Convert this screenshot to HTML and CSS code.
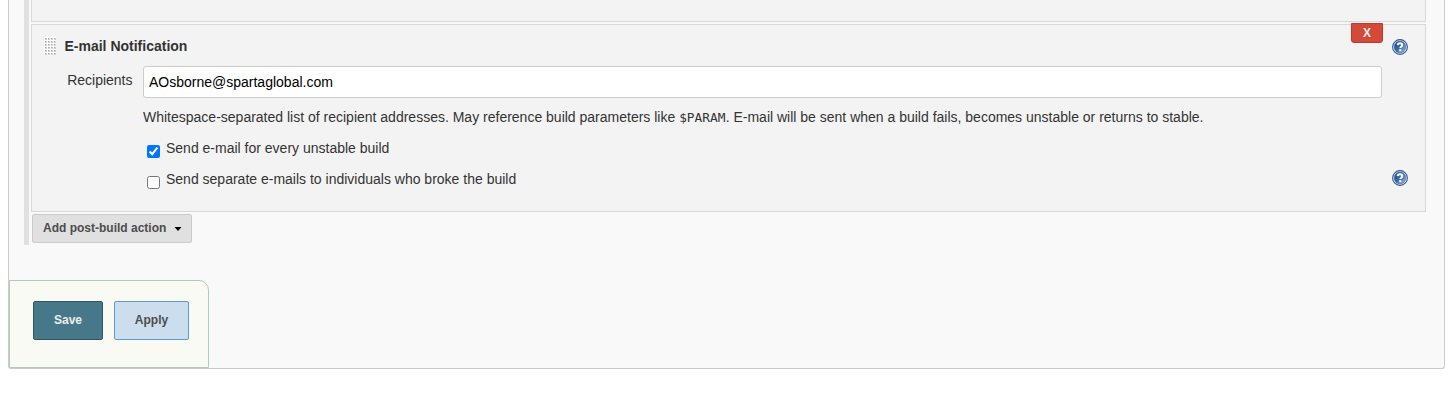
FILE: index.html
```html
<!DOCTYPE html>
<html lang="en">
<head>
<meta charset="utf-8">
<title>Post-build Actions</title>
<link rel="stylesheet" href="styles.css">
</head>
<body>
<svg class="defs" width="0" height="0" aria-hidden="true">
  <defs>
    <linearGradient id="help-fill" x1="0" y1="0" x2="1" y2="1">
      <stop offset="0" stop-color="#204a87"/>
      <stop offset=".45" stop-color="#3465a4"/>
      <stop offset="1" stop-color="#a9c1df"/>
    </linearGradient>
    <symbol id="help" viewBox="0 0 16 16">
      <circle cx="8" cy="8" r="7.4" fill="#f4f7fb" stroke="#2c5797" stroke-width="1.1"/>
      <circle cx="8" cy="8" r="5.9" fill="url(#help-fill)" stroke="#3c659f" stroke-width=".5"/>
      <path d="M5.7 6.1C5.8 4.7 6.7 4.2 8 4.2c1.4 0 2.3.7 2.3 1.8 0 1.5-2 1.5-2 3.1" fill="none" stroke="#fff" stroke-width="1.9"/>
      <rect x="7.2" y="10.2" width="2.1" height="2" fill="#fff"/>
    </symbol>
  </defs>
</svg>
<main class="panel">
  <div class="actions">
    <section class="previous"></section>
    <section class="block">
      <header class="block-head">
        <span class="grip"></span>
        <h2 class="block-title">E-mail Notification</h2>
        <button class="remove">X</button>
        <svg class="help"><use href="#help"/></svg>
      </header>
      <div class="field">
        <label class="label" for="to">Recipients</label>
        <input class="input" id="to" type="text" value="AOsborne@spartaglobal.com">
      </div>
      <p class="description">Whitespace-separated list of recipient addresses. May reference build parameters like <code class="param">$PARAM</code>. E-mail will be sent when a build fails, becomes unstable or returns to stable.</p>
      <div class="option">
        <input class="check" id="unstable" type="checkbox" checked>
        <label for="unstable">Send e-mail for every unstable build</label>
      </div>
      <div class="option">
        <input class="check" id="separate" type="checkbox">
        <label for="separate">Send separate e-mails to individuals who broke the build</label>
        <svg class="help option-help"><use href="#help"/></svg>
      </div>
    </section>
    <button class="add">Add post-build action<svg class="caret" viewBox="0 0 7 4"><path d="M0 0h7L3.5 4z"/></svg></button>
  </div>
  <footer class="bottom">
    <button class="btn save">Save</button>
    <button class="btn apply">Apply</button>
  </footer>
</main>
</body>
</html>
```
FILE: styles.css
```css
* { box-sizing: border-box; }
body {
  margin: 0;
  background: #fff;
  color: #333;
  font: 14px/20px "Liberation Sans", Arial, sans-serif;
}
button, input { font-family: inherit; margin: 0; }
.defs { display: block; }
.panel {
  width: 1437px;
  height: 369px;
  margin-left: 8px;
  border: 1px solid #ccc;
  border-top: 0;
  border-radius: 0 0 3px 3px;
  background: #f9f9f9;
}
.actions {
  height: 245px;
  margin: 0 18px 0 15px;
  padding-left: 2px;
  border-left: 5px solid #e0e0e0;
}
.previous {
  height: 22px;
  border: 1px solid #d9d9d9;
  border-top: 0;
  background: #f3f3f3;
}
.block {
  height: 188px;
  margin-top: 2px;
  border: 1px solid #d9d9d9;
  background: #f3f3f3;
}
.block-head {
  display: flex;
  align-items: flex-start;
  height: 41px;
  padding-left: 12px;
}
.grip {
  width: 12px;
  height: 18px;
  margin-top: 12px;
  background-color: #fff;
  background-image:
    linear-gradient(#aaa, #aaa),
    linear-gradient(#d5d5d5, #d5d5d5);
  background-size: 3px 3px;
  background: conic-gradient(from 0deg at 1px 1px, #ccc 0 25%, #ddd 0 50%, #ccc 0 75%, #aaa 0) 1px 1px / 3px 3px;
  background:
    conic-gradient(from 270deg at 1px 1px, #a8a8a8 25%, transparent 0) 1px 1px / 3px 3px,
    conic-gradient(from 270deg at 2px 2px, #d0d0d0 25%, #fff 0) 1px 1px / 3px 3px;
}
.block-title {
  flex: 1;
  margin: 11px 0 0 8.5px;
  font-size: 14px;
  line-height: 20px;
}
.remove {
  width: 32px;
  height: 20px;
  margin-top: -2px;
  padding: 0 0 1px;
  border: 1px solid #c03a2c;
  border-radius: 0 0 3px 3px;
  background: #d34a3a;
  color: #eee;
  font-size: 12px;
  font-weight: bold;
}
.help {
  width: 16px;
  height: 16px;
  margin: 14px 17px 0 9px;
  flex: none;
}
.field { display: flex; }
.label {
  width: 111px;
  padding: 4px 10.5px 0 0;
  text-align: right;
}
.input {
  width: 1239px;
  height: 32px;
  padding: 0 5px;
  border: 1px solid #ccc;
  border-radius: 3px;
  background: #fff;
  color: #000;
  font-size: 14px;
  outline: 0;
}
.description {
  height: 20px;
  margin: 9px 0 11px 111px;
  white-space: nowrap;
}
.param {
  display: inline-block;
  width: 46.5px;
  font: 12.8px/16px "DejaVu Sans Mono", monospace;
}
.option {
  display: flex;
  height: 31px;
  padding-left: 115px;
}
.check {
  width: 13px;
  height: 13px;
  margin: 7px 6px 0 0;
}
.option-help {
  margin-top: 1px;
  margin-left: auto;
}
.add {
  display: flex;
  align-items: center;
  width: 160px;
  height: 29px;
  margin: 2px 0 0 1px;
  padding: 0 0 1px 10px;
  border: 1px solid #ccc;
  border-radius: 2px;
  background: #e0e0e0;
  color: #4d4d4d;
  font-size: 12px;
  font-weight: bold;
}
.caret {
  width: 8px;
  height: 4px;
  margin: 2px 0 0 8px;
  fill: #000;
}
.bottom {
  display: flex;
  align-items: flex-start;
  gap: 11px;
  width: 200px;
  height: 88px;
  margin-top: 35px;
  padding: 20px 0 0 23px;
  border: 1px solid #abcdb9;
  border-radius: 0 10px 0 0;
  background: #f8faf3;
}
.btn {
  height: 39px;
  padding: 0 0 1px;
  border: 1px solid;
  border-radius: 2px;
  font-size: 12px;
  font-weight: bold;
}
.save {
  width: 70px;
  background: #477889;
  border-color: #2f5566;
  color: #eee;
}
.apply {
  width: 75px;
  background: #ccdded;
  border-color: #5f99cf;
  color: #4d4d4d;
}
```
